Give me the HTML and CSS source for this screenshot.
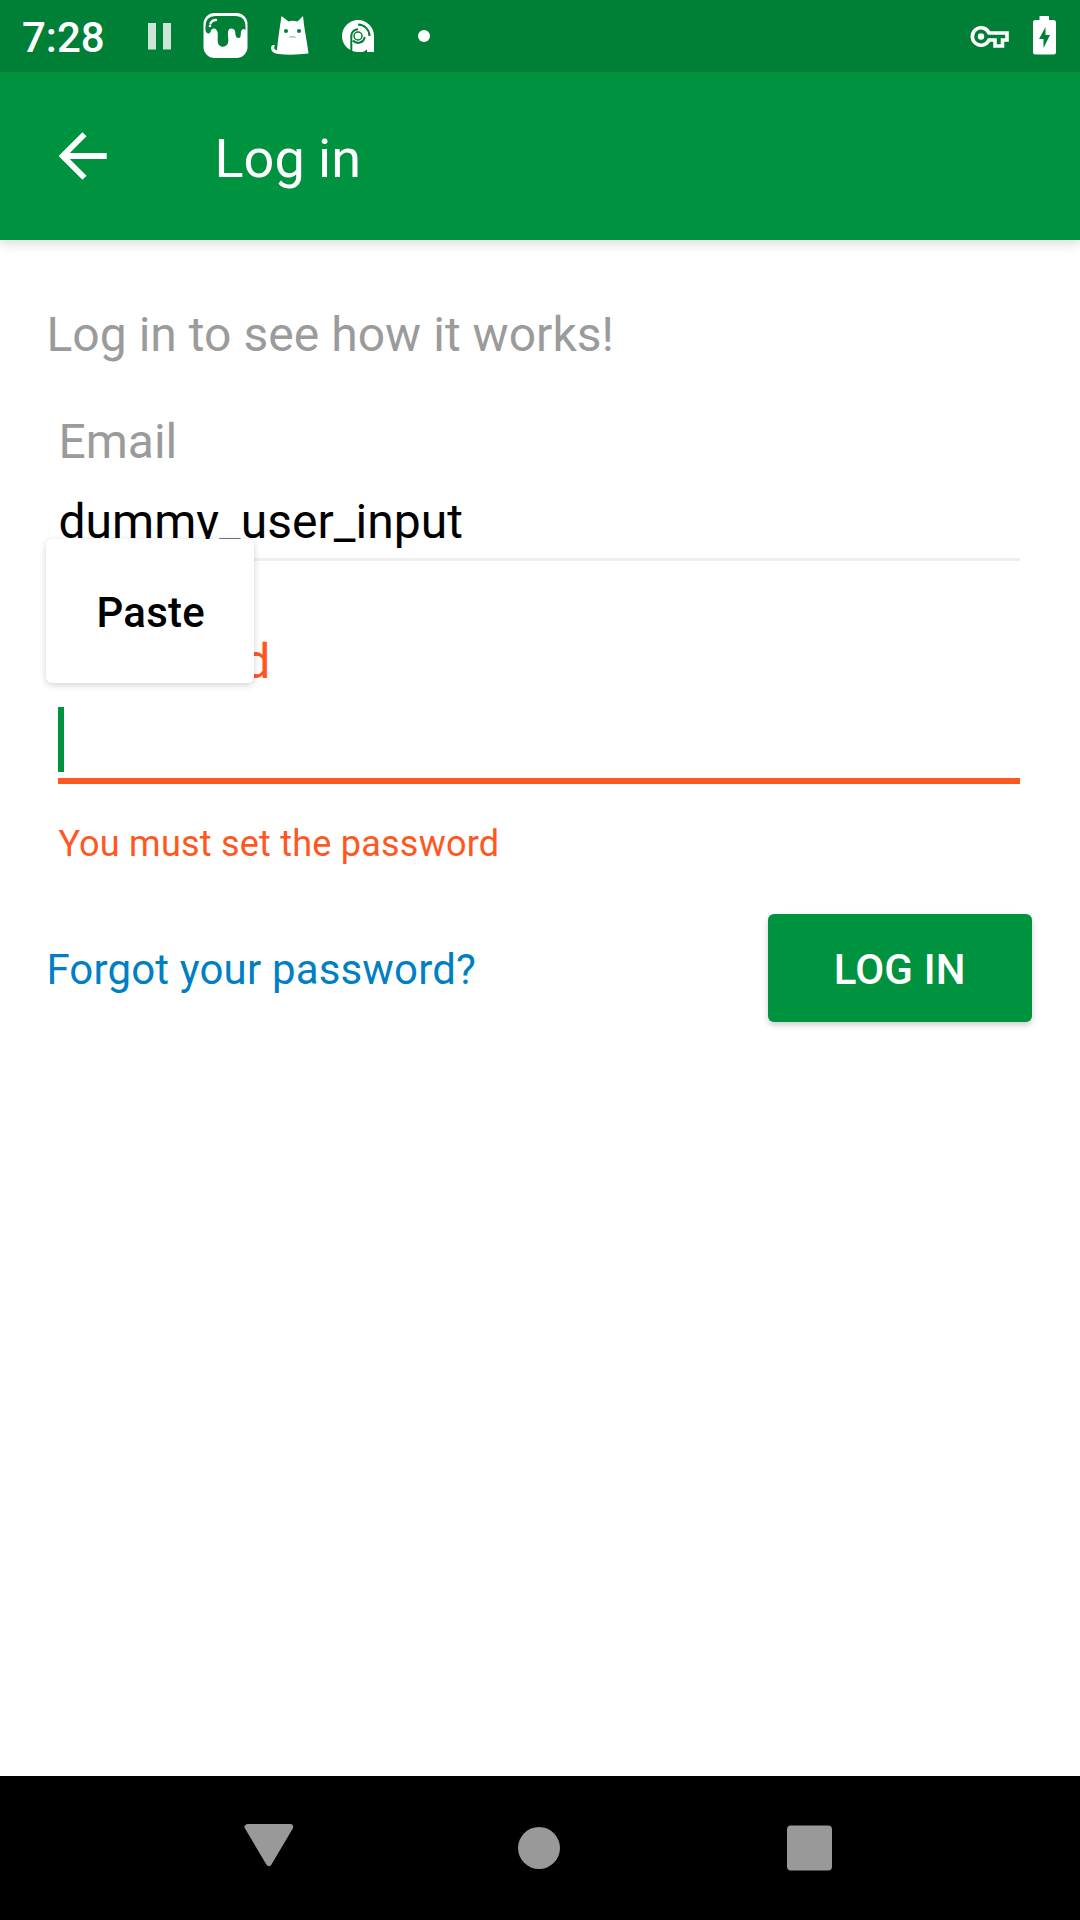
FILE: index.html
```html
<!DOCTYPE html>
<html lang="en">
<head>
<meta charset="utf-8">
<title>Log in</title>
<link rel="stylesheet" href="styles.css">
</head>
<body>
<div class="screen">
  <div class="status-bar">
    <span class="clock">7:28</span>
    <svg class="status-left" width="290" height="72" viewBox="140 0 290 72" fill="#fff">
      <path d="M148 23h8v26.500h-8zM163 23h8v26.500h-8z" opacity=".8"/>
      <rect x="203.500" y="13" width="44" height="45" rx="11"/>
      <path class="cutout" d="M205.500 31V27Q205.500 16 216 16H235Q245.500 16 245.500 27V30Q243 28 241.500 30.500C240 33 242 38 238.500 38C234.500 38 236 32 234.500 30C232 27.500 228.500 28 228 32C227.500 36 229 40 228 43C226 48 219.500 48 218 43C217 39 219 33 216.500 30C214 27 211 29 210.500 32Q208 35.500 205.500 31Z"/>
      <path d="M210.500 23.500Q212 20 216 20" fill="none" stroke="#fff" stroke-width="2.400" stroke-linecap="round"/>
      <circle cx="210" cy="26" r="1.300"/>
      <path d="M281.500 16L288.500 21.500Q292 20 297.500 21.500L303 16C304 28 307 41 308.500 53.500Q293 55.500 278 54Q271 53 271 48Q271 44.500 275 45Q272.500 49 277 50.500C278 39 280 26 281.500 16Z"/>
      <g class="cutout"><circle cx="286" cy="31" r="2"/><circle cx="299" cy="31" r="2"/></g>
      <path class="cutline" d="M289.500 37.500Q291 36.200 292.500 37Q294 36.200 295.500 37.500" stroke-width=".6"/>
      <circle cx="358" cy="36" r="16"/>
      <path d="M358 36H374V52H358Z"/>
      <path class="cutline" d="M351.300 53V36A6.700 6.700 0 0 1 358 29.300M364.700 37A6.700 6.700 0 0 1 353 40.500M358 24.500A11.500 11.500 0 0 1 369.500 36" stroke-width="2"/>
      <path class="cutout" d="M363 52L367 49.500V52Z"/>
      <circle class="cutline" cx="358" cy="36" r="4" stroke-width="1.500"/>
      <circle cx="424" cy="36" r="6"/>
    </svg>
    <svg class="status-right" width="100" height="72" viewBox="960 0 100 72" fill="none" stroke="#fff">
      <path d="M989 33A8.700 8.700 0 1 0 989 40H995V46H1002.500V40H1007V33Z" stroke-width="3.600"/>
      <circle cx="981" cy="36.500" r="3.200" fill="#fff" stroke="none"/>
      <path d="M1039.500 16h9.500v4h4.500q2.500 0 2.500 2.500v29.500q0 2.500-2.500 2.500h-18q-2.500 0-2.500-2.500V22.500q0-2.500 2.500-2.500h4z" fill="#fff" stroke="none"/>
      <path class="cutout" d="M1045.500 27v8h4.500L1043.500 48V39H1039Z" stroke="none"/>
    </svg>
  </div>

  <header class="toolbar">
    <svg class="back" width="49" height="48" viewBox="0 0 49 48" fill="none" stroke="#fff" stroke-width="5.800"><path d="M26.500 2.200L4.700 24L26.500 45.800M4.700 24H48.700"/></svg>
    <h1 class="title">Log in</h1>
  </header>

  <main class="content">
    <p class="intro">Log in to see how it works!</p>
    <div class="field">
      <label class="label">Email</label>
      <div class="value">dummy_user_input</div>
    </div>
    <div class="field field-error">
      <label class="label">Password</label>
      <div class="entry"><span class="caret"></span></div>
      <p class="message">You must set the password</p>
      <div class="popup">Paste</div>
    </div>
    <div class="actions">
      <a class="forgot">Forgot your password?</a>
      <button class="submit">LOG IN</button>
    </div>
  </main>

  <nav class="nav-bar">
    <svg class="nav-icon" viewBox="0 0 60 60"><path d="M7.600 9H50.200L28.900 45Z" stroke="#999" stroke-width="6" stroke-linejoin="round"/></svg>
    <svg class="nav-icon" viewBox="0 0 60 60"><circle cx="29" cy="30" r="21"/></svg>
    <svg class="nav-icon" viewBox="0 0 60 60"><rect x="7" y="7.500" width="45" height="45" rx="4"/></svg>
  </nav>
</div>
</body>
</html>
```
FILE: styles.css
```css
* { box-sizing: border-box; }

body, h1, p { margin: 0; }

body {
  font-family: Roboto, sans-serif;
  background: #fff;
}

.screen {
  display: flex;
  flex-direction: column;
  width: 1080px;
  height: 1920px;
  overflow: hidden;
}

.status-bar {
  position: relative;
  z-index: 1;
  display: flex;
  align-items: center;
  height: 72px;
  padding: 0 20px 0 22px;
  background: #007f36;
  color: #fff;
}

.clock {
  width: 118px;
  padding-top: 3px;
  font-size: 42px;
  font-weight: 500;
  line-height: 76px;
}

.status-right { margin-left: auto; }
.cutout { fill: #007f36; }
.cutline { fill: none; stroke: #007f36; }

.toolbar {
  display: flex;
  align-items: center;
  gap: 108px;
  height: 168px;
  padding-left: 57.500px;
  background: #00933f;
  color: #fff;
  box-shadow: 0 3px 12px rgba(0, 0, 0, .16);
}

.title {
  padding-top: 6px;
  font-size: 54px;
  font-weight: 400;
  line-height: 64px;
}

.content {
  flex: 1;
  padding: 67px 48px 0 46.400px;
}

.intro, .label, .value {
  font-size: 48px;
  line-height: 56px;
}

.intro, .label { color: #9b9b9b; }
.intro { letter-spacing: .04px; }

.field {
  position: relative;
  margin: 51px 12px 0;
}

.label { display: block; }

.value {
  margin-top: 24px;
  padding-bottom: 8px;
  border-bottom: 3px solid #eee;
  box-sizing: content-box;
  letter-spacing: .04px;
  color: #000;
}

.field-error { margin-top: 73px; }
.field-error .label { color: #ff5722; }

.entry {
  display: flex;
  padding: 17px 0 6px;
  border-bottom: 6px solid #ff5722;
}

.caret {
  width: 6px;
  height: 65px;
  background: #00933f;
}

.message {
  margin-top: 38px;
  font-size: 36px;
  line-height: 44px;
  letter-spacing: .23px;
  color: #ff5722;
}

.popup {
  position: absolute;
  left: -12.400px;
  top: -95px;
  width: 208px;
  height: 144px;
  padding-left: 1.500px;
  border-radius: 6px;
  background: #fff;
  box-shadow: 0 2px 7px rgba(0, 0, 0, .18);
  font-size: 42px;
  font-weight: 500;
  letter-spacing: .2px;
  line-height: 147px;
  text-align: center;
  color: #000;
}

.actions {
  display: flex;
  align-items: center;
  justify-content: space-between;
  margin-top: 48px;
}

.forgot {
  height: 108px;
  font-size: 42px;
  letter-spacing: .16px;
  line-height: 112px;
  color: #007fc5;
}

.submit {
  width: 264.500px;
  height: 108px;
  padding: 3px 0 0;
  border: 0;
  border-radius: 6px;
  background: #00933f;
  box-shadow: 0 3px 6px rgba(0, 0, 0, .2);
  font: 500 42px/50px Roboto, sans-serif;
  letter-spacing: .15px;
  color: #fff;
}

.nav-bar {
  display: flex;
  align-items: center;
  justify-content: center;
  gap: 210px;
  height: 144px;
  background: #000;
}

.nav-icon {
  width: 60px;
  height: 60px;
  fill: #999;
}
```
